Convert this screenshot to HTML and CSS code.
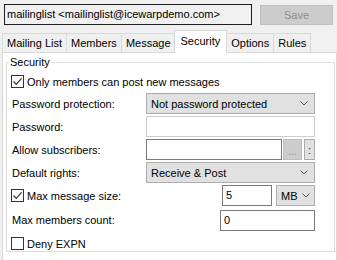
FILE: index.html
```html
<!DOCTYPE html>
<html lang="en">
<head>
    <meta charset="UTF-8">
    <meta name="viewport" content="width=device-width, initial-scale=1.0">
    <title>Mailing List - Security</title>
    <link rel="stylesheet" href="styles.css">
</head>
<body>

    <!-- Header -->
    <div class="header">
        <div class="title-box">mailinglist &lt;mailinglist@icewarpdemo.com&gt;</div>
        <button class="save-btn" disabled>Save</button>
    </div>

    <!-- Tabs -->
    <div class="tabs">
        <div class="tab">Mailing List</div>
        <div class="tab">Members</div>
        <div class="tab">Message</div>
        <div class="tab active">Security</div>
        <div class="tab">Options</div>
        <div class="tab">Rules</div>
    </div>

    <div class="panel">
        <fieldset class="group">
            <legend>Security</legend>
            <div class="form-grid">
                <label class="check wide">
                    <span class="box checked">
                        <svg width="11" height="11" viewBox="0 0 11 11"><path d="M1.5 5.5 L4.2 8.3 L9.6 2.4" fill="none" stroke="#333" stroke-width="1.2"/></svg>
                    </span>
                    Only members can post new messages
                </label>

                <span class="label">Password protection:</span>
                <div class="combo">
                    <span>Not password protected</span>
                    <svg class="chev" width="8" height="5" viewBox="0 0 8 5"><path d="M0.5 0.5 L4 4 L7.5 0.5" fill="none" stroke="#555" stroke-width="1"/></svg>
                </div>

                <span class="label">Password:</span>
                <div class="input disabled"></div>

                <span class="label">Allow subscribers:</span>
                <div class="input-row">
                    <div class="input grow"></div>
                    <button class="dots-btn" disabled><span class="dots">...</span></button>
                    <button class="mini-btn">:</button>
                </div>

                <span class="label">Default rights:</span>
                <div class="combo">
                    <span>Receive &amp; Post</span>
                    <svg class="chev" width="8" height="5" viewBox="0 0 8 5"><path d="M0.5 0.5 L4 4 L7.5 0.5" fill="none" stroke="#555" stroke-width="1"/></svg>
                </div>

                <label class="check">
                    <span class="box checked">
                        <svg width="11" height="11" viewBox="0 0 11 11"><path d="M1.5 5.5 L4.2 8.3 L9.6 2.4" fill="none" stroke="#333" stroke-width="1.2"/></svg>
                    </span>
                    Max message size:
                </label>
                <div class="input-row right">
                    <div class="input size">5</div>
                    <div class="combo unit">
                        <span>MB</span>
                        <svg class="chev" width="8" height="5" viewBox="0 0 8 5"><path d="M0.5 0.5 L4 4 L7.5 0.5" fill="none" stroke="#555" stroke-width="1"/></svg>
                    </div>
                </div>

                <span class="label">Max members count:</span>
                <div class="input-row right">
                    <div class="input count">0</div>
                </div>

                <label class="check wide">
                    <span class="box"></span>
                    Deny EXPN
                </label>
            </div>
        </fieldset>
    </div>

</body>
</html>
```

FILE: styles.css
```css
/* General Styles */
body {
    font-family: "Liberation Sans", Arial, sans-serif;
    font-size: 11px;
    color: #000;
    background-color: #f0f0f0;
    margin: 0;
    padding: 0;
    width: 337px;
    height: 260px;
    overflow: hidden;
}

/* Header */
.header {
    display: flex;
    align-items: flex-start;
    padding: 4px 4px 0 4px;
}

.title-box {
    width: 244px;
    height: 19px;
    line-height: 19px;
    padding-left: 2px;
    border: 1px solid #1e1e1e;
    background: #f0f0f0;
    white-space: nowrap;
}

.save-btn {
    margin: 1px 0 0 8px;
    width: 73px;
    height: 20px;
    background: #cccccc;
    border: 1px solid #bfbfbf;
    color: #8d8d8d;
    font-family: inherit;
    font-size: 11px;
    padding: 0;
}

/* Tabs */
.tabs {
    display: flex;
    align-items: flex-end;
    height: 21px;
    margin-top: 6px;
    padding-left: 2px;
    position: relative;
    z-index: 1;
}

.tab {
    height: 18px;
    line-height: 18px;
    padding: 0 4px;
    background: #f0f0f0;
    border: 1px solid #d9d9d9;
    border-bottom: none;
    margin-right: -1px;
}

.tab.active {
    height: 22px;
    line-height: 20px;
    margin: 0 -1px -1px -1px;
    padding: 0 6px;
    background: #fff;
    position: relative;
    z-index: 2;
}

.panel {
    background: #fff;
    border: 1px solid #d9d9d9;
    margin: 0 0 0 2px;
    padding: 2px 1px 0 3px;
    height: 206px;
}

/* Group box */
.group {
    border: 1px solid #dcdcdc;
    margin: 0;
    padding: 0 19px 4px 5px;
    height: 191px;
}

.group legend {
    padding: 0 1px;
    margin-left: -3px;
    line-height: 14px;
}

.form-grid {
    display: grid;
    grid-template-columns: 134px 1fr;
    grid-template-rows: 19px 21px 21px 21px 21px 21px 23px 21px;
    row-gap: 2px;
    margin-top: 3px;
    align-items: end;
}

.form-grid > .label,
.form-grid > .check {
    align-self: center;
}

.wide {
    grid-column: 1 / 3;
}

.check {
    display: flex;
    align-items: center;
    gap: 3px;
    margin-left: -1px;
}

.box {
    width: 11px;
    height: 11px;
    border: 1px solid #333;
    background: #fff;
    display: flex;
}

/* Inputs */
.combo {
    height: 19px;
    border: 1px solid #adadad;
    background: #e1e1e1;
    display: flex;
    align-items: center;
    justify-content: space-between;
    padding: 0 6px 0 4px;
}

.input {
    height: 19px;
    line-height: 19px;
    border: 1px solid #7a7a7a;
    background: #fff;
    padding-left: 3px;
}

.input.disabled {
    border-color: #cccccc;
}

.input-row {
    display: flex;
    align-items: center;
    gap: 1px;
}

.input-row.right {
    justify-content: flex-end;
}

.grow {
    flex: 1;
}

.dots-btn {
    width: 19px;
    height: 21px;
    padding: 0;
    background: #cccccc;
    border: 1px solid #bfbfbf;
    margin-right: 1px;
    display: flex;
    align-items: flex-end;
    justify-content: center;
}

.dots {
    color: #8a8a8a;
    font-family: inherit;
    font-size: 10px;
    line-height: 14px;
}

.mini-btn {
    width: 11px;
    height: 21px;
    padding: 0;
    background: #e1e1e1;
    border: 1px solid #adadad;
    color: #402060;
    font-family: inherit;
    font-size: 11px;
}

.size {
    width: 45px;
}

.unit {
    width: 29px;
    margin-left: 3px;
    padding: 0 4px;
}

.count {
    width: 90px;
}
```
